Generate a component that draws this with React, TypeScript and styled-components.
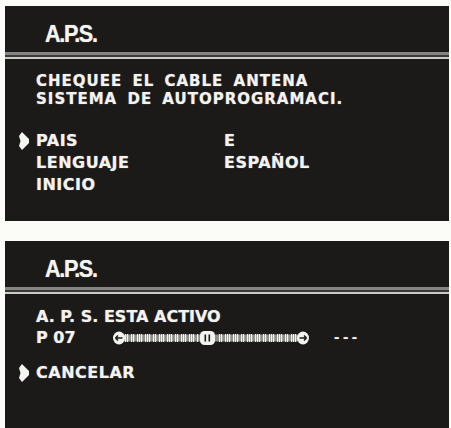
import React from "react";
import styled, { createGlobalStyle } from "styled-components";

const Global = createGlobalStyle`
  html, body { margin: 0; padding: 0; overflow: hidden; background: #fbfbf8; }
  #root { width: 451px; height: 428px; }
`;

const Page = styled.div`
  display: flex;
  flex-direction: column;
  gap: 20px;
  padding: 6px 2px 0 5px;
  height: 428px;
  box-sizing: border-box;
`;

const Panel = styled.section<{ $h: number }>`
  height: ${(p) => p.$h}px;
  background: #1c1a18;
  display: flex;
  flex-direction: column;
  overflow: hidden;
  flex-shrink: 0;
`;

const Header = styled.div`
  height: 46px;
  box-sizing: border-box;
  padding: 16px 0 0 40px;
`;

const Title = styled.h1`
  margin: 0;
  display: inline-block;
  font-family: "Liberation Sans", Arial, sans-serif;
  font-weight: 700;
  font-size: 24px;
  line-height: 24px;
  letter-spacing: -1.5px;
  color: #f4f4f1;
  transform: scaleX(0.9);
  transform-origin: left center;
  text-shadow: 0 0 1px rgba(255, 255, 255, 0.7);
`;

const Divider = styled.div`
  height: 7px;
  flex-shrink: 0;
  background: linear-gradient(
    to bottom,
    #858583 0px,
    #858583 3px,
    #3a3937 3px,
    #3a3937 5px,
    #cacac6 5px,
    #cacac6 7px
  );
`;

const Body = styled.div<{ $pt: number }>`
  padding: ${(p) => p.$pt}px 0 0 13px;
  font-family: "DejaVu Sans", Verdana, sans-serif;
  font-weight: 700;
  color: #f2f2ef;
  text-shadow: 0 0 1px rgba(255, 255, 255, 0.6);
`;

const Message = styled.div<{ $fs?: number; $lh?: number; $ls?: number; $ws?: number }>`
  padding-left: 18px;
  font-size: ${(p) => p.$fs ?? 16}px;
  line-height: ${(p) => p.$lh ?? 16}px;
  letter-spacing: ${(p) => p.$ls ?? 0}px;
  word-spacing: ${(p) => p.$ws ?? 0}px;
  white-space: nowrap;
`;

const Menu = styled.div<{ $mt: number }>`
  margin-top: ${(p) => p.$mt}px;
  display: grid;
  grid-template-columns: 12px 182px auto;
  column-gap: 6px;
  font-size: 16px;
  line-height: 22px;
  letter-spacing: 0.5px;
`;

const MarkerCell = styled.div`
  display: flex;
  align-items: center;
  justify-content: center;
  height: 22px;
`;

const Cell = styled.div`
  white-space: nowrap;
`;

const SliderRow = styled.div`
  margin-top: 2px;
  padding-left: 18px;
  display: flex;
  align-items: center;
  height: 21px;
  font-size: 16px;
  line-height: 21px;
`;

const Channel = styled.div`
  width: 77px;
  white-space: nowrap;
`;

const Dots = styled.div`
  margin-left: 25px;
  font-size: 13px;
  letter-spacing: 0px;
  word-spacing: -1px;
`;

const Marker = () => (
  <svg width="12" height="18" viewBox="0 0 12 18">
    <polygon
      points="4,0 11,7 11,11 4,18 1,14 2.5,9 1,4"
      fill="#f4f4f1"
    />
  </svg>
);

const ticks: number[] = [];
for (let x = 12; x < 184; x += 2) {
  if (x > 84 && x < 104) continue;
  if ((x * 7) % 11 < 3) continue;
  ticks.push(x);
}

const Slider = () => (
  <svg width="196" height="16" viewBox="0 0 196 16">
    <rect x="6" y="4.5" width="184" height="7" fill="#8e8e8b" />
    {ticks.map((x) => (
      <rect key={x} x={x} y="4" width="1.2" height="8" fill="#f2f2ef" />
    ))}
    <ellipse cx="6" cy="8" rx="6" ry="6.5" fill="#f2f2ef" />
    <path d="M2.5 8 H9.5 M2.5 8 L5 5.5 M2.5 8 L5 10.5" stroke="#1c1a18" strokeWidth="1.5" fill="none" />
    <ellipse cx="190" cy="8" rx="6" ry="6.5" fill="#f2f2ef" />
    <path d="M186.5 8 H193.5 M193.5 8 L191 5.5 M193.5 8 L191 10.5" stroke="#1c1a18" strokeWidth="1.5" fill="none" />
    <rect x="87" y="1" width="15" height="14" rx="4.5" fill="#f2f2ef" />
    <rect x="91.5" y="4.5" width="1.6" height="7" fill="#1c1a18" />
    <rect x="95.5" y="4.5" width="1.6" height="7" fill="#1c1a18" />
  </svg>
);

export default function App() {
  return (
    <>
      <Global />
      <Page>
        <Panel $h={215}>
          <Header>
            <Title>A.P.S.</Title>
          </Header>
          <Divider />
          <Body $pt={14}>
            <Message $fs={15} $lh={17.5} $ls={1} $ws={4}>
              CHEQUEE EL CABLE ANTENA
            </Message>
            <Message $fs={15} $lh={17.5} $ls={1} $ws={4}>
              SISTEMA DE AUTOPROGRAMACI.
            </Message>
            <Menu $mt={21.5}>
              <MarkerCell>
                <Marker />
              </MarkerCell>
              <Cell>PAIS</Cell>
              <Cell>E</Cell>
              <MarkerCell />
              <Cell>LENGUAJE</Cell>
              <Cell>ESPAÑOL</Cell>
              <MarkerCell />
              <Cell>INICIO</Cell>
              <Cell />
            </Menu>
          </Body>
        </Panel>
        <Panel $h={187}>
          <Header>
            <Title>A.P.S.</Title>
          </Header>
          <Divider />
          <Body $pt={15}>
            <Message>A. P. S. ESTA ACTIVO</Message>
            <SliderRow>
              <Channel>P 07</Channel>
              <Slider />
              <Dots>- - -</Dots>
            </SliderRow>
            <Menu $mt={14}>
              <MarkerCell>
                <Marker />
              </MarkerCell>
              <Cell>CANCELAR</Cell>
              <Cell />
            </Menu>
          </Body>
        </Panel>
      </Page>
    </>
  );
}
